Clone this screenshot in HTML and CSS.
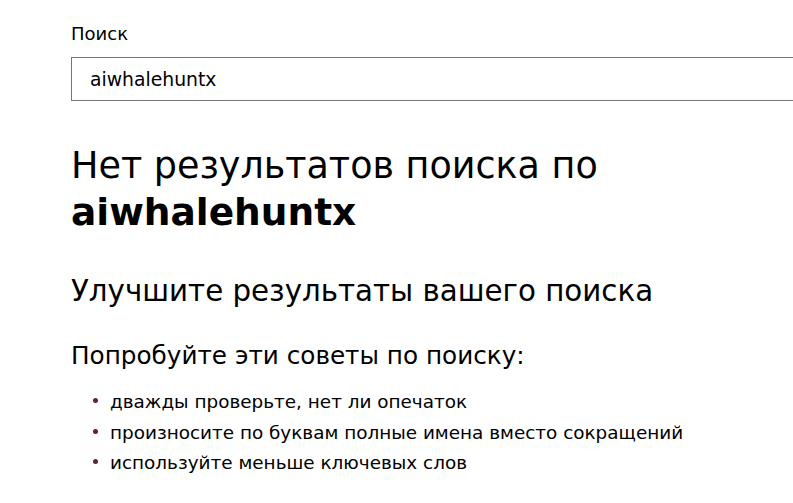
FILE: index.html
```html
<!DOCTYPE html>
<html lang="ru">
<head>
    <meta charset="UTF-8">
    <meta name="viewport" content="width=device-width, initial-scale=1.0">
    <title>Поиск</title>
    <link rel="stylesheet" href="styles.css">
</head>
<body>
    <div class="container">
        <form class="search-form">
            <label for="query" class="search-label">Поиск</label>
            <input type="text" id="query" class="search-input" value="aiwhalehuntx">
        </form>

        <h1 class="no-results">Нет результатов поиска по <strong>aiwhalehuntx</strong></h1>

        <h2 class="improve-title">Улучшите результаты вашего поиска</h2>
        <p class="tips-intro">Попробуйте эти советы по поиску:</p>
        <ul class="tips-list">
            <li>дважды проверьте, нет ли опечаток</li>
            <li>произносите по буквам полные имена вместо сокращений</li>
            <li>используйте меньше ключевых слов</li>
        </ul>
    </div>
</body>
</html>
```

FILE: styles.css
```css
:root {
    --text-color: #000;
    --border-color: #767676;
    --bullet-color: #6b1a45;
}

* {
    margin: 0;
    padding: 0;
    box-sizing: border-box;
    font-family: 'DejaVu Sans', 'Noto Sans', sans-serif;
}

body {
    background: #fff;
    color: var(--text-color);
    overflow-x: hidden;
}

.container {
    padding: 22px 0 0 71px;
}

.search-label {
    display: block;
    font-size: 18px;
    line-height: 24px;
    margin-bottom: 11px;
}

.search-input {
    display: block;
    width: 760px;
    height: 44px;
    padding: 0 18px;
    border: 1px solid var(--border-color);
    border-radius: 0;
    font-size: 18.8px;
    color: var(--text-color);
    outline: none;
}

.no-results {
    margin-top: 42px;
    font-size: 36.5px;
    font-weight: 400;
    line-height: 46px;
}

.no-results strong {
    font-weight: 700;
    font-size: 37.5px;
}

.improve-title {
    margin-top: 37px;
    font-size: 29.3px;
    font-weight: 400;
    line-height: 36px;
}

.tips-intro {
    margin-top: 32px;
    font-size: 24.7px;
    line-height: 30px;
}

.tips-list {
    margin-top: 16px;
    padding-left: 39px;
    list-style: none;
}

.tips-list li {
    position: relative;
    font-size: 18.4px;
    line-height: 30.5px;
}

.tips-list li::before {
    content: "";
    position: absolute;
    left: -17px;
    top: 11px;
    width: 5px;
    height: 5px;
    border-radius: 50%;
    background: var(--bullet-color);
}
```
